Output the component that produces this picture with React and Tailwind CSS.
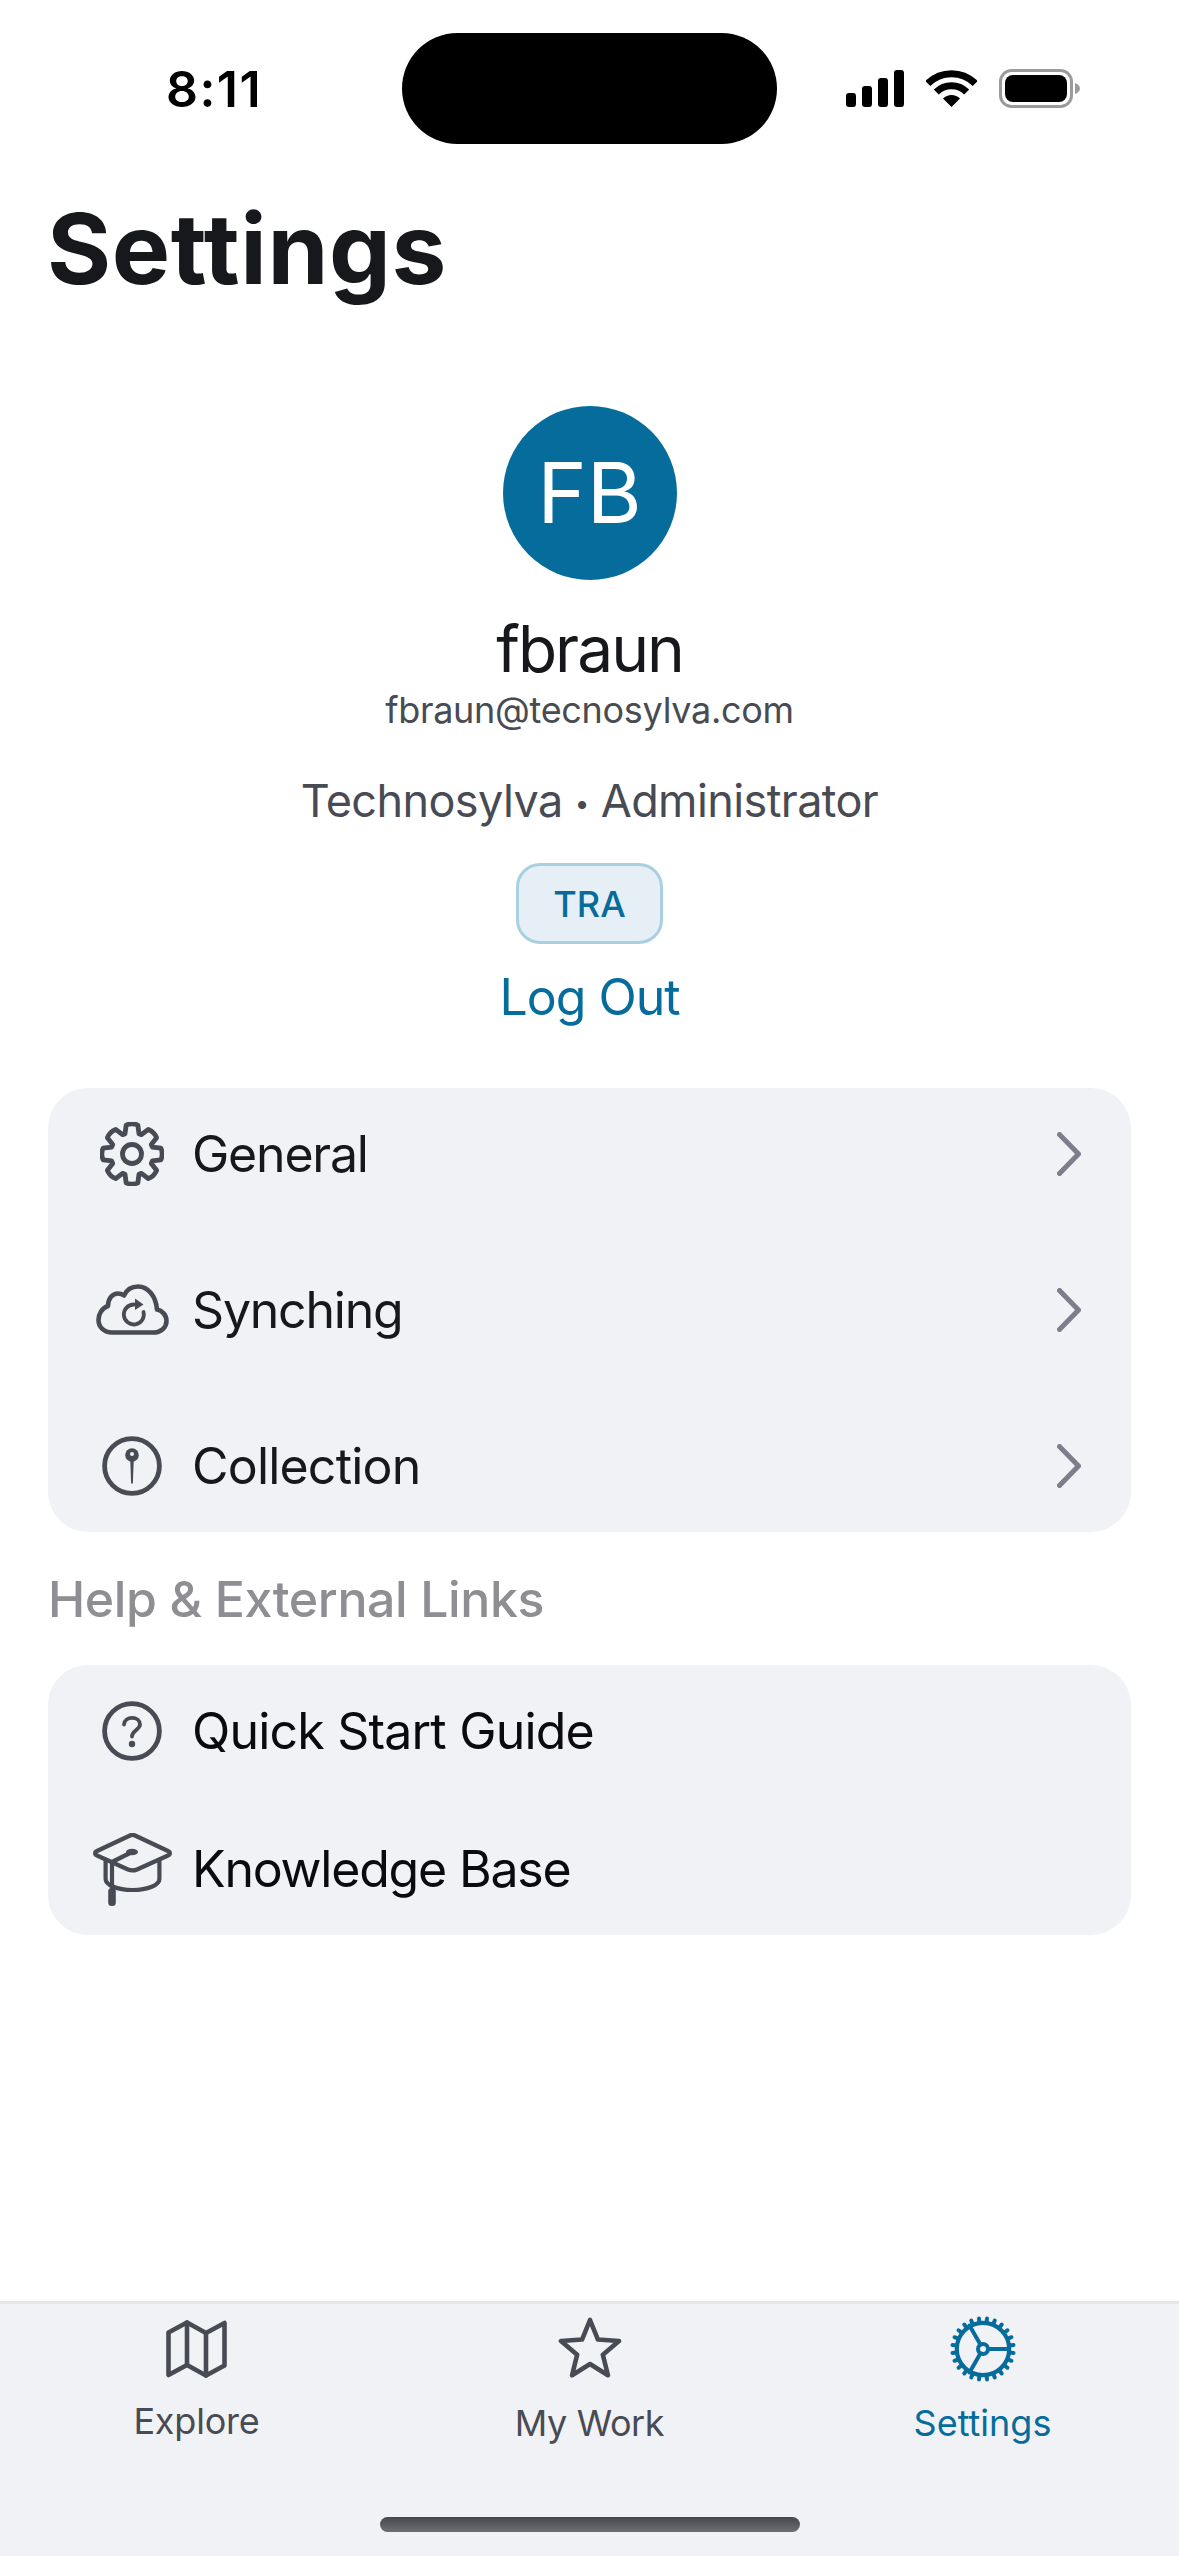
const slate = '#484b53'
const blue = '#066c9b'

function Gear() {
  // eight rounded teeth around a ring
  const pts = []
  const n = 8
  for (let i = 0; i < n; i++) {
    const a = (i / n) * Math.PI * 2 - Math.PI / 2
    const w = 0.2
    const at = (r, d) => `${(32 + r * Math.cos(a + d)).toFixed(2)} ${(32 + r * Math.sin(a + d)).toFixed(2)}`
    pts.push(`${i === 0 ? 'M' : 'L'}${at(21.5, -0.33)}`)
    pts.push(`L${at(29.5, -w)}`)
    pts.push(`Q${at(31.5, 0)} ${at(29.5, w)}`)
    pts.push(`L${at(21.5, 0.33)}`)
  }
  return (
    <svg width="64" height="64" viewBox="0 0 64 64" fill="none" stroke={slate} strokeWidth="4.8" strokeLinejoin="round">
      <path d={pts.join(' ') + ' Z'} />
      <circle cx="32" cy="32" r="9.5" />
    </svg>
  )
}

function CloudSync() {
  return (
    <svg width="73" height="52" viewBox="0 0 73 52" fill="none" stroke={slate} strokeWidth="4.6" strokeLinecap="round" strokeLinejoin="round">
      <path d="M16 48.5H57C65 48.5 70.5 43.5 70.5 37C70.5 31 66 26.5 61 25.5C60 12 52 2.5 42 2.5C35 2.5 30.5 6 28 11.5C26 10 24 9.5 22 9.5C16 9.5 12 15 12 22C6 24 2.5 30 2.5 36C2.5 43 8 48.5 16 48.5Z" />
      <path d="M47.5 28A10 10 0 1 1 38 20.5" strokeWidth="3.8" />
      <path d="M39 14.5L47.5 20.5L39 26Z" fill={slate} stroke="none" />
    </svg>
  )
}

function PinCircle() {
  return (
    <svg width="60" height="60" viewBox="0 0 60 60" fill="none" stroke={slate} strokeWidth="4.8">
      <circle cx="30" cy="30" r="27.4" />
      <path d="M28.2 22H31.8L30.9 47C30.6 48 29.4 48 29.1 47Z" fill={slate} stroke="none" />
      <circle cx="30" cy="19" r="6.8" fill={slate} stroke="none" />
      <circle cx="30" cy="18" r="2" fill="#f1f2f6" stroke="none" />
    </svg>
  )
}

function HelpCircle() {
  return (
    <svg width="60" height="60" viewBox="0 0 60 60" fill="none" stroke={slate} strokeWidth="4.8" strokeLinecap="round">
      <circle cx="30" cy="30" r="27.4" />
      <path d="M22 23.5C22.5 19 26 16.8 30 16.8C34.5 16.8 38 19.5 38 23.5C38 28.5 30 29.5 30 35.5" strokeWidth="3.8" />
      <circle cx="30" cy="43" r="3.2" fill={slate} stroke="none" />
    </svg>
  )
}

function GradCap() {
  return (
    <svg width="79" height="73" viewBox="0 0 79 73" fill="none" stroke={slate} strokeWidth="4.2" strokeLinecap="round" strokeLinejoin="round">
      <path d="M37 2.5C38.5 1.8 40.5 1.8 42 2.5L75 18C77.5 19 77.5 21.5 75 22.5L44 36.5C41 37.8 38 37.8 35 36.5L4 22.5C1.5 21.5 1.5 19 4 18Z" />
      <path d="M12.6 27V46C12.6 52 24 57 39.5 57C55 57 66.4 52 66.4 46V27" />
      <path d="M39 19L19 29V56" />
      <ellipse cx="39" cy="19" rx="6" ry="3.2" fill={slate} stroke="none" />
      <rect x="15.2" y="55" width="7.6" height="18" rx="3.5" fill={slate} stroke="none" />
    </svg>
  )
}

function Chevron() {
  return (
    <svg width="24" height="44" viewBox="0 0 24 44" fill="none" stroke="#7d7e8c" strokeWidth="5" strokeLinecap="round" strokeLinejoin="round">
      <path d="M2.5 2.5L21.5 22L2.5 41.5" />
    </svg>
  )
}

function MapIcon() {
  return (
    <svg width="61" height="58" viewBox="0 0 61 58" fill="none" stroke={slate} strokeWidth="4.6" strokeLinecap="round" strokeLinejoin="round">
      <path d="M2.5 12.5L21 2.5L40 13L58.5 3V45.5L40 55.5L21 45L2.5 55Z" />
      <path d="M21 2.5V45M40 13V55.5" />
    </svg>
  )
}

function StarIcon() {
  const pts = []
  for (let i = 0; i < 10; i++) {
    const r = i % 2 === 0 ? 30.5 : 13.5
    const a = (i / 10) * Math.PI * 2 - Math.PI / 2
    pts.push(`${(32 + r * Math.cos(a)).toFixed(2)},${(33.5 + r * Math.sin(a)).toFixed(2)}`)
  }
  return (
    <svg width="64" height="62" viewBox="0 0 64 62" fill="none" stroke={slate} strokeWidth="4.6" strokeLinejoin="round">
      <polygon points={pts.join(' ')} />
    </svg>
  )
}

function SettingsTabIcon() {
  const teeth = Array.from({ length: 24 }, (_, i) => ((i + 0.5) / 24) * Math.PI * 2)
  return (
    <svg width="66" height="66" viewBox="0 0 66 66" fill="none" stroke={blue} strokeLinecap="round">
      <circle cx="33" cy="33" r="26.2" strokeWidth="4.2" />
      {teeth.map((a, i) => (
        <line key={i} x1={33 + 27 * Math.cos(a)} y1={33 + 27 * Math.sin(a)} x2={33 + 30.8 * Math.cos(a)} y2={33 + 30.8 * Math.sin(a)} strokeWidth="4" />
      ))}
      <circle cx="33" cy="33" r="5" strokeWidth="4" />
      <path d="M38 33H59M30.5 28.7L19.5 9.5M30.5 37.3L19.5 56.5" strokeWidth="4" />
    </svg>
  )
}

function StatusIcons() {
  return (
    <div className="flex items-center">
      <svg width="58" height="37" viewBox="0 0 58 37" fill="#000">
        <rect x="0" y="23" width="10" height="14" rx="3" />
        <rect x="16" y="16" width="10" height="21" rx="3" />
        <rect x="32" y="8" width="10" height="29" rx="3" />
        <rect x="48" y="0" width="10" height="37" rx="3" />
      </svg>
      <svg className="ml-[22px]" width="51" height="37" viewBox="0 0 51 37" fill="none" stroke="#000" strokeWidth="7">
        <path d="M1.8 13.5A33.5 33.5 0 0 1 49.2 13.5" />
        <path d="M10.3 22A21.5 21.5 0 0 1 40.7 22" />
        <path d="M25.5 37L17 28.5A12 12 0 0 1 34 28.5Z" fill="#000" stroke="none" />
      </svg>
      <svg className="ml-[22px]" width="82" height="39" viewBox="0 0 82 39" fill="none">
        <rect x="1.5" y="1.5" width="71" height="36" rx="11" stroke="#9b9b9b" strokeWidth="3" />
        <rect x="6" y="6" width="62" height="27" rx="8" fill="#000" />
        <path d="M76 14C79 15 81 17 81 19.5C81 22 79 24 76 25Z" fill="#9b9b9b" />
      </svg>
    </div>
  )
}

function Row({ icon, label, arrow, dark, tight }) {
  return (
    <div className="flex items-center h-[132px]">
      <div className="w-[84px] ml-[42px] flex items-center justify-center shrink-0">{icon}</div>
      <span className={`ml-[18px] text-[50px] leading-[56px] ${tight ? 'tracking-[-1.2px]' : 'tracking-[-0.8px]'} ${dark ? 'text-[#0b0b0d]' : 'text-[#17181b]'}`}>{label}</span>
      {arrow && <div className="ml-auto mr-[50px]"><Chevron /></div>}
    </div>
  )
}

export default function App() {
  return (
    <div className="w-[1179px] h-[2556px] bg-white flex flex-col overflow-hidden font-['Inter','Liberation_Sans',sans-serif]">
      <div className="flex items-center pt-[33px] h-[144px]">
        <div className="w-[402px] flex justify-center">
          <span className="pl-[26px] text-[50px] leading-[56px] tracking-[1.5px] font-semibold text-black">8:11</span>
        </div>
        <div className="w-[375px] h-[111px] rounded-full bg-black" />
        <div className="pl-[69px]"><StatusIcons /></div>
      </div>

      <h1 className="mt-[55px] ml-[47px] text-[98px] leading-[100px] tracking-[0.6px] font-bold text-[#17181b]">Settings</h1>

      <div className="flex flex-col items-center">
        <div className="mt-[107px] w-[174px] h-[174px] rounded-full bg-[#066c9b] flex items-center justify-center text-white text-[84px] leading-none">FB</div>
        <div className="mt-[34px] text-[64px] leading-[70px] tracking-[-2px] text-[#17181b]">fbraun</div>
        <div className="mt-[6px] text-[36px] leading-[40px] tracking-[-0.3px] text-[#484b53]">fbraun@tecnosylva.com</div>
        <div className="mt-[46px] h-[50px] text-[45px] leading-[50px] tracking-[-0.6px] text-[#484b53]">Technosylva <span className="text-[26px] leading-none align-[4px]">•</span> Administrator</div>
        <div className="mt-[37px] w-[147px] h-[81px] rounded-[24px] border-[3px] border-[#a9cfe0] bg-[#e6eff5] flex items-center justify-center text-[36px] leading-none font-[450] text-[#066c9b]">TRA</div>
        <div className="mt-[25px] text-[50px] leading-[56px] tracking-[-1px] text-[#066c9b]">Log Out</div>
      </div>

      <div className="mt-[63px] mx-[48px] h-[444px] rounded-[40px] bg-[#f1f2f6] flex flex-col justify-between">
        <Row icon={<Gear />} label="General" arrow tight />
        <Row icon={<CloudSync />} label="Synching" arrow tight />
        <Row icon={<PinCircle />} label="Collection" arrow />
      </div>

      <div className="mt-[39px] ml-[48px] text-[50px] leading-[56px] tracking-[-0.4px] font-medium text-[#8e8e93]">Help &amp; External Links</div>

      <div className="mt-[38px] mx-[48px] h-[270px] rounded-[40px] bg-[#f1f2f6] flex flex-col justify-between">
        <Row icon={<HelpCircle />} label="Quick Start Guide" dark />
        <Row icon={<GradCap />} label="Knowledge Base" dark tight />
      </div>

      <div className="mt-auto h-[255px] bg-[#f1f2f6] border-t-[3px] border-[#e6e6e8] flex flex-col">
        <div className="grid grid-cols-3 h-[213px]">
          <div className="flex flex-col items-center pt-[16px]">
            <MapIcon />
            <span className="mt-[23px] text-[36px] leading-[40px] tracking-[-0.2px] text-[#484b53]">Explore</span>
          </div>
          <div className="flex flex-col items-center pt-[13px]">
            <StarIcon />
            <span className="mt-[24px] text-[36px] leading-[40px] tracking-[-0.4px] text-[#484b53]">My Work</span>
          </div>
          <div className="flex flex-col items-center pt-[12px]">
            <SettingsTabIcon />
            <span className="mt-[21px] text-[36px] leading-[40px] text-[#066c9b]">Settings</span>
          </div>
        </div>
        <div className="self-center w-[420px] h-[15px] rounded-full bg-gradient-to-b from-[#47484d] to-[#6e6f73]" />
      </div>
    </div>
  )
}
